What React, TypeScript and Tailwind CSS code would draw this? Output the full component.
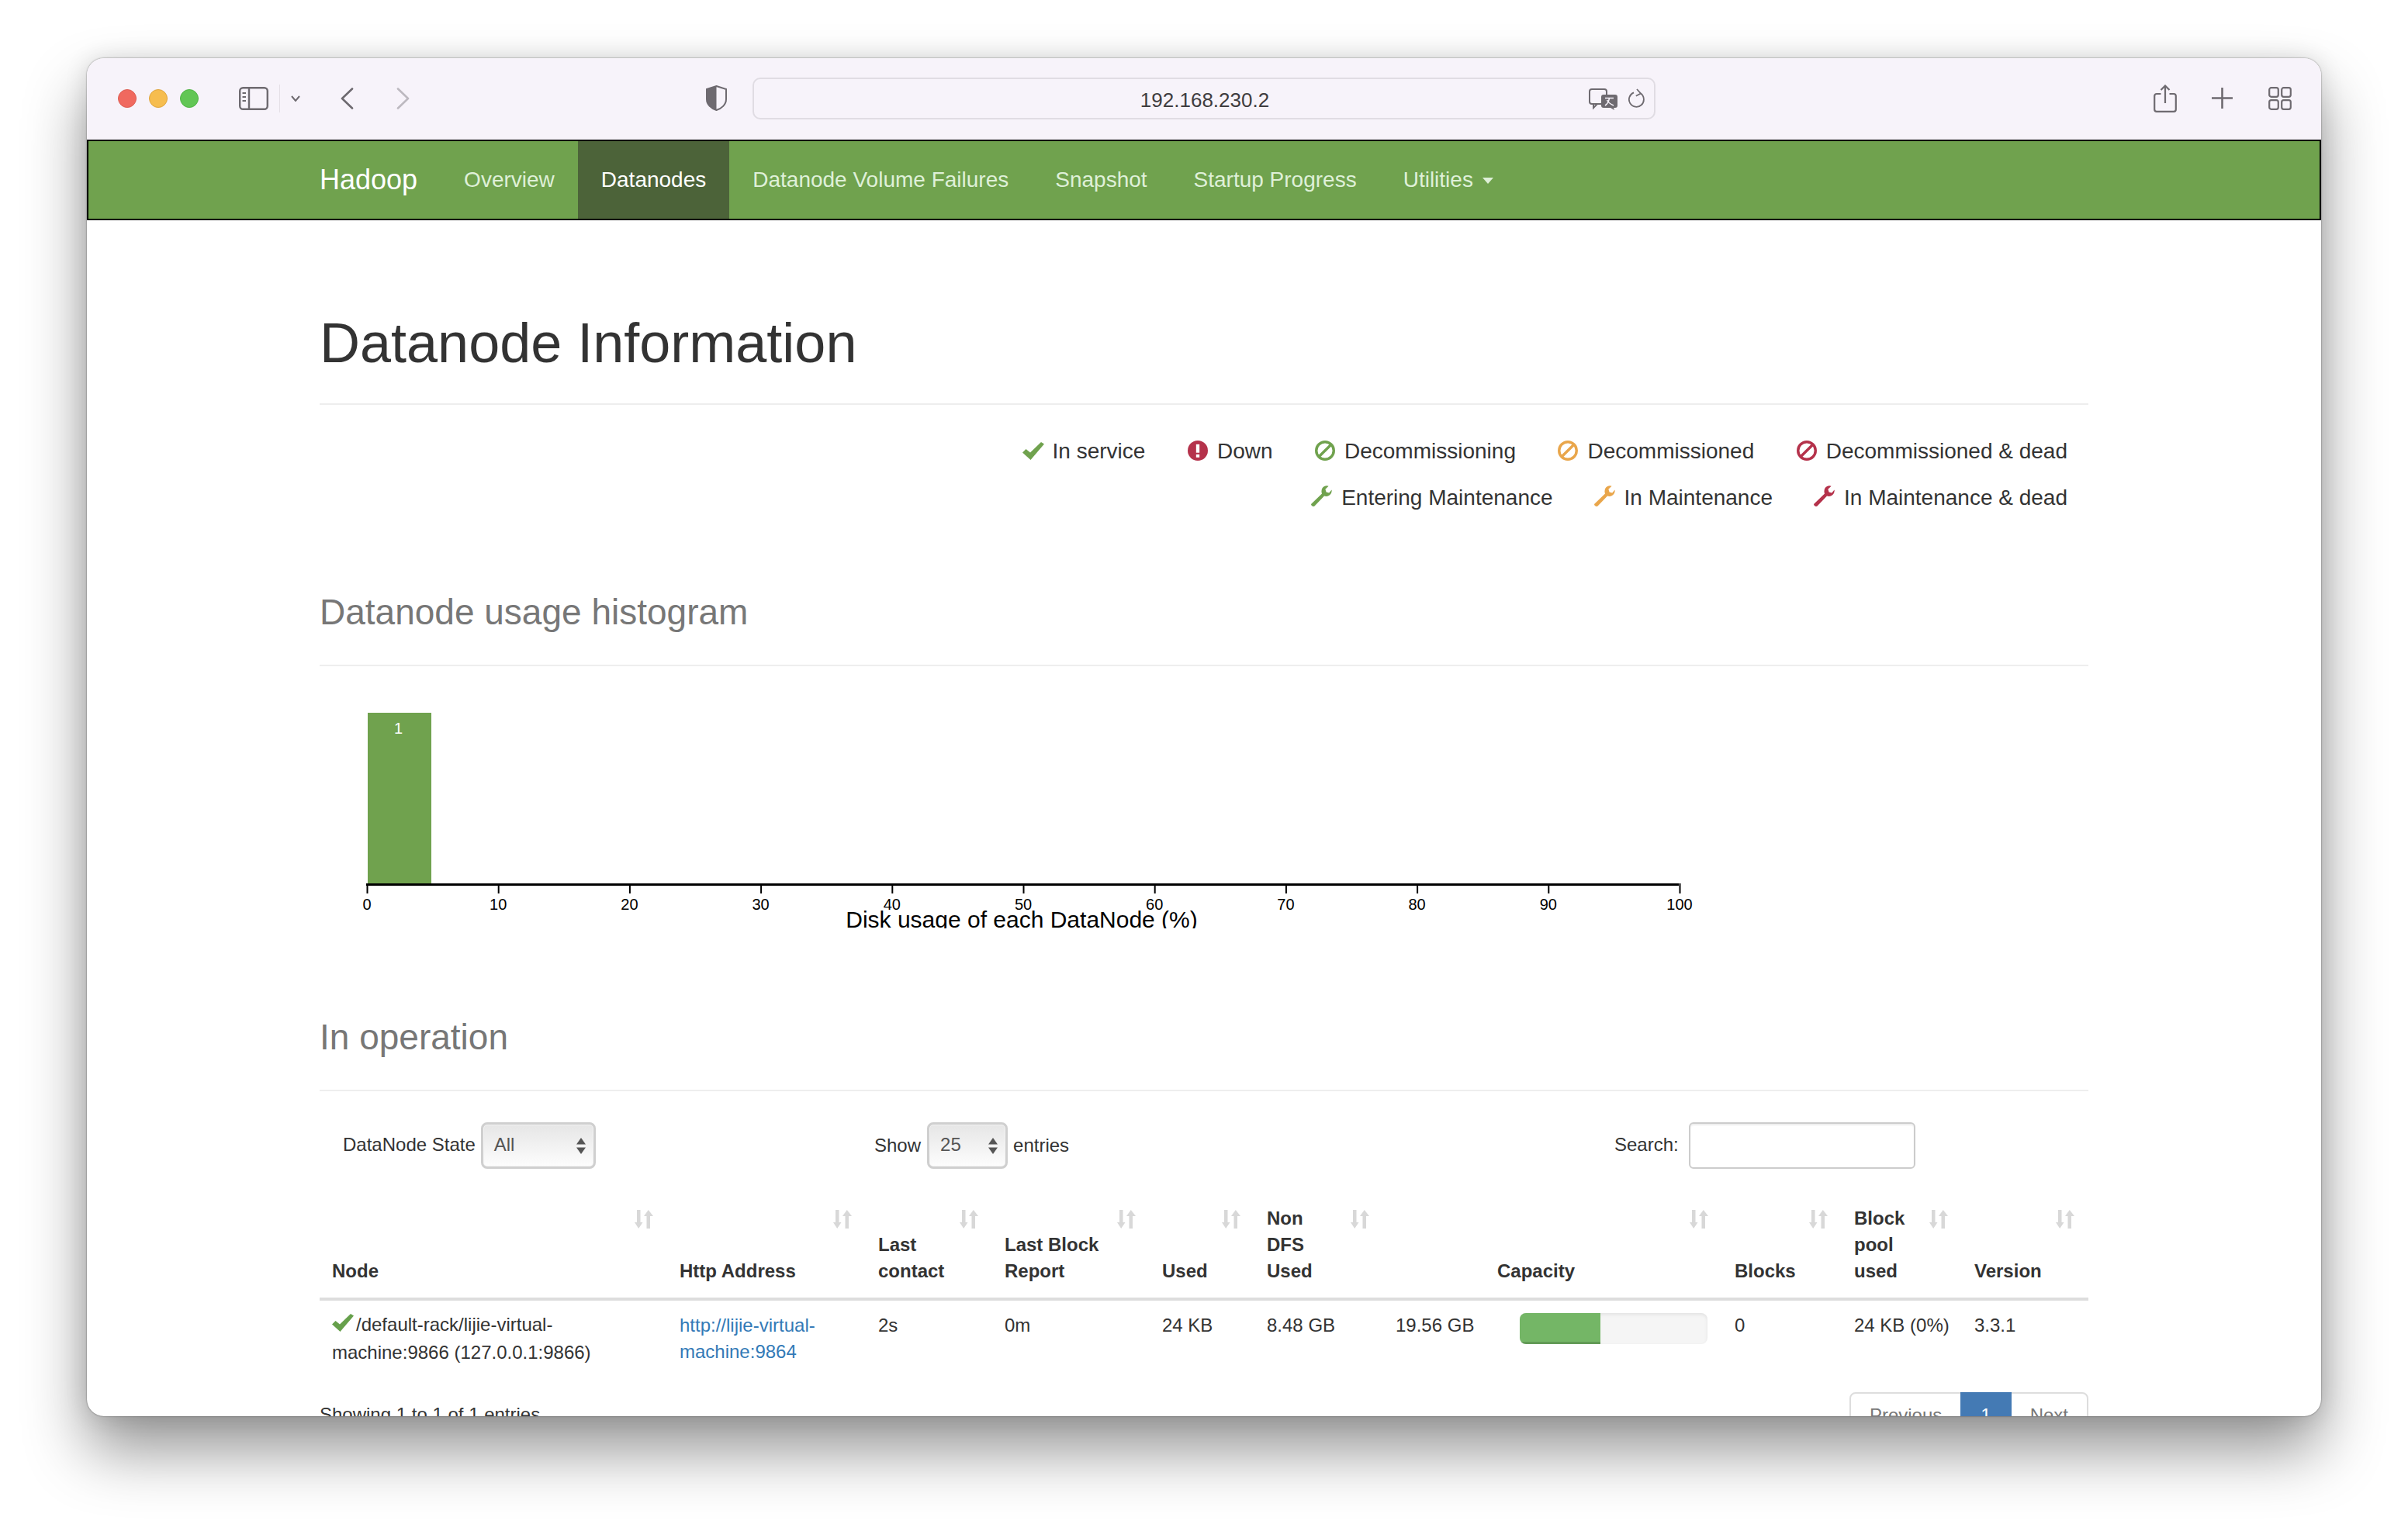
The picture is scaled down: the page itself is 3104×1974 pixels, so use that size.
const sans = "font-['Liberation_Sans',Arial,sans-serif]";

function Check({ className }: { className?: string }) {
  return (
    <svg viewBox="0 0 28 23" className={className} fill="currentColor">
      <path d="M0 13.5 L4.5 9 L10 13.5 L24 0 L28 2.5 L10.5 23 Z" />
    </svg>
  );
}

function Down({ className }: { className?: string }) {
  return (
    <svg viewBox="0 0 24 24" className={className}>
      <circle cx="12" cy="12" r="12" fill="currentColor" />
      <rect x="10" y="4.5" width="4" height="10" fill="#fff" />
      <rect x="10" y="16.5" width="4" height="3.6" fill="#fff" />
    </svg>
  );
}

function Ban({ className }: { className?: string }) {
  return (
    <svg viewBox="0 0 24 24" className={className} fill="none" stroke="currentColor" strokeWidth="3.2">
      <circle cx="12" cy="12" r="10.4" />
      <path d="M5 19 L19 5" />
    </svg>
  );
}

function Wrench({ className }: { className?: string }) {
  return (
    <svg viewBox="0 0 28 28" className={className} fill="currentColor">
      <path d="M1.5 24.5 L15 11.5 C13.6 7.5 15 3.6 18.2 2 C20 1.1 22 1.1 23.6 1.8 L19.4 5.8 L20.6 9.4 L24.2 10.4 L27.6 6.4 C28 9.6 26.8 12.4 24 14 C22 15.2 19.8 15.2 18 14.6 L5.5 27.5 C4.4 28.4 3 28 2 27 C1 26 0.7 25.4 1.5 24.5 Z" />
    </svg>
  );
}

function SortIcon() {
  return (
    <svg viewBox="0 0 24 24" className="absolute top-[20px] right-[18px] h-[24px] w-[24px] text-[#d8d8d8]" fill="currentColor">
      <path d="M3 0 H7.5 V16 H10.5 L5.2 24 L0 16 H3 Z" />
      <path d="M15.5 24 H20 V8 H24 L17.8 0 L12 8 H15.5 Z" />
    </svg>
  );
}

function SelectBox({ value, width }: { value: string; width: string }) {
  return (
    <div className={`${width} flex h-[60px] items-center justify-between rounded-[8px] border-[3px] border-[#cfcfcf] bg-gradient-to-b from-[#e6e6e6] to-[#fdfdfd] pl-[14px] pr-[10px] text-[24px] text-[#555] shadow-[inset_0_0_0_1px_#f4f4f4]`}>
      <span className="mb-[2px]">{value}</span>
      <svg viewBox="0 0 12 21" className="h-[21px] w-[12px] text-[#555]" fill="currentColor">
        <path d="M6 0 L12 8.5 H0 Z M6 21 L0 12.5 H12 Z" />
      </svg>
    </div>
  );
}

function SectionHeader({ title }: { title: string }) {
  return (
    <div className="border-b-2 border-[#eee] pb-[42px]">
      <h2 className="text-[46px] leading-[52px] font-normal text-[#777]">{title}</h2>
    </div>
  );
}

function LegendItem({ icon, color, label, gap }: { icon: "check" | "down" | "ban" | "wrench"; color: string; label: string; gap: string }) {
  return (
    <div className={`flex items-center ${gap}`}>
      <span className={`flex h-[28px] w-[28px] shrink-0 items-center justify-center ${icon === "wrench" ? "mb-[6px]" : "mb-[2px]"} ${color}`}>
        {icon === "check" && <Check className="h-[23px] w-[28px]" />}
        {icon === "down" && <Down className="h-[26px] w-[26px]" />}
        {icon === "ban" && <Ban className="h-[26px] w-[26px]" />}
        {icon === "wrench" && <Wrench className="h-[28px] w-[28px]" />}
      </span>
      <span>{label}</span>
    </div>
  );
}

const ticks = [0, 10, 20, 30, 40, 50, 60, 70, 80, 90, 100];

function Histogram() {
  return (
    <svg width="1800" height="298" viewBox="0 0 1800 298" className="block">
      <rect x="62" y="20" width="82" height="220" fill="#70a24e" />
      <text x="101.5" y="47" textAnchor="middle" fontSize="20" fill="#fff" fontFamily="Liberation Sans">1</text>
      <rect x="60" y="240" width="1692" height="3" fill="#000" />
      {ticks.map((t) => (
        <g key={t}>
          <rect x={60.5 + t * 16.92} y="240" width="2" height="13" fill="#000" />
          <text x={61 + t * 16.92} y="274" textAnchor="middle" fontSize="20" fill="#000" fontFamily="Liberation Sans">{t}</text>
        </g>
      ))}
      <text x="905" y="297" textAnchor="middle" fontSize="30" fill="#000" fontFamily="Liberation Sans">Disk usage of each DataNode (%)</text>
    </svg>
  );
}

const cols = ["w-[448px]", "w-[256px]", "w-[163px]", "w-[203px]", "w-[135px]", "w-[166px]", "w-[437px]", "w-[154px]", "w-[155px]", "w-[163px]"];

const headers = [
  ["Node"],
  ["Http Address"],
  ["Last", "contact"],
  ["Last Block", "Report"],
  ["Used"],
  ["Non", "DFS", "Used"],
  ["Capacity"],
  ["Blocks"],
  ["Block", "pool", "used"],
  ["Version"],
];

function DataTable() {
  return (
    <table className="w-[2280px] table-fixed border-collapse text-[24px] leading-[34px]">
      <thead>
        <tr className="border-b-4 border-[#ddd]">
          {headers.map((lines, i) => (
            <th key={lines[0]} className={`${cols[i]} relative px-[16px] pt-[14px] pb-[17px] text-left align-bottom font-bold ${i === 6 ? "pl-[147px]" : ""}`}>
              <SortIcon />
              {lines.map((line) => (
                <div key={line}>{line}</div>
              ))}
            </th>
          ))}
        </tr>
      </thead>
      <tbody>
        <tr className="align-top">
          <td className="px-[16px] pt-[13px] pb-[18px] leading-[36px]">
            <Check className="mr-[3px] inline-block h-[23px] w-[28px] align-[-1px] text-[#66a04b]" />
            /default-rack/lijie-virtual-
            <br />
            machine:9866 (127.0.0.1:9866)
          </td>
          <td className="px-[16px] pt-[15px]">
            <a className="text-[#337ab7]">
              http://lijie-virtual-
              <br />
              machine:9864
            </a>
          </td>
          <td className="px-[16px] pt-[15px]">2s</td>
          <td className="px-[16px] pt-[15px]">0m</td>
          <td className="px-[16px] pt-[15px]">24 KB</td>
          <td className="px-[16px] pt-[15px]">8.48 GB</td>
          <td className="px-[16px] pt-[15px]">
            <div className="flex items-start">
              <span className="w-[160px] shrink-0">19.56 GB</span>
              <div className="mt-[1px] h-[40px] w-[242px] overflow-hidden rounded-[8px] bg-[#f5f5f5] shadow-[inset_0_2px_4px_rgba(0,0,0,0.08)]">
                <div className="h-full w-[43%] bg-[#74b666] shadow-[inset_0_-3px_0_rgba(0,0,0,0.15)]" />
              </div>
            </div>
          </td>
          <td className="px-[16px] pt-[15px]">0</td>
          <td className="px-[16px] pt-[15px] whitespace-nowrap">24 KB (0%)</td>
          <td className="px-[16px] pt-[15px]">3.3.1</td>
        </tr>
      </tbody>
    </table>
  );
}

function Toolbar() {
  return (
    <div className="flex h-[105px] items-center bg-[#f7f3fa] pb-[2px] pl-[40px] text-[#6e6a70]">
      <span className="h-[24px] w-[24px] rounded-full border border-[#dd5f55] bg-[#f0695f]" />
      <span className="ml-[16px] h-[24px] w-[24px] rounded-full border border-[#dfa63f] bg-[#f6bd4f]" />
      <span className="ml-[16px] h-[24px] w-[24px] rounded-full border border-[#50b446] bg-[#62c655]" />

      <svg viewBox="0 0 38 30" className="ml-[52px] h-[30px] w-[38px]" fill="none" stroke="currentColor" strokeWidth="2.4">
        <rect x="1.2" y="1.2" width="35.6" height="27.6" rx="4" />
        <path d="M13 1.2 V28.8" />
        <path d="M4.5 8 H9 M4.5 13 H9 M4.5 18 H9" strokeWidth="2" />
      </svg>
      <span className="ml-[14px] h-[36px] w-px bg-[#e4dfe6]" />
      <svg viewBox="0 0 12 8" className="ml-[14px] h-[8px] w-[12px]" fill="none" stroke="currentColor" strokeWidth="2">
        <path d="M1 1 L6 7 L11 1" />
      </svg>
      <svg viewBox="0 0 17 28" className="ml-[52px] h-[28px] w-[17px]" fill="none" stroke="currentColor" strokeWidth="2.6" strokeLinecap="round" strokeLinejoin="round">
        <path d="M15 1.5 L2 14 L15 26.5" />
      </svg>
      <svg viewBox="0 0 17 28" className="ml-[55px] h-[28px] w-[17px] text-[#bdb9c0]" fill="none" stroke="currentColor" strokeWidth="2.6" strokeLinecap="round" strokeLinejoin="round">
        <path d="M2 1.5 L15 14 L2 26.5" />
      </svg>

      <svg viewBox="0 0 27 33" className="ml-[382px] h-[33px] w-[27px]" fill="none">
        <path d="M13.5 1 L26 5 V18 C26 25 20 30 13.5 32 C7 30 1 25 1 18 V5 Z" fill="#f7f3fa" stroke="currentColor" strokeWidth="2" />
        <path d="M13.5 1 L1 5 V18 C1 25 7 30 13.5 32 Z" fill="currentColor" />
      </svg>

      <div className="relative ml-[33px] flex h-[54px] w-[1164px] items-center justify-center rounded-[10px] border-2 border-[#e0dce3] pt-[5px] pl-[2px] text-[26px] text-[#3f3d40]">
        192.168.230.2
        {/* translate + reload sit on top of the url field */}
        <svg viewBox="0 0 38 28" className="absolute top-[12px] right-[46px] h-[28px] w-[38px] text-[#6e6a70]">
          <rect x="1" y="1" width="22" height="19" rx="3" fill="none" stroke="currentColor" strokeWidth="2" />
          <path d="M6 20 L6 25 L11 20" fill="none" stroke="currentColor" strokeWidth="2" />
          <rect x="16" y="8" width="21" height="17" rx="3" fill="currentColor" />
          <path d="M28 25 L33 28 L32 25 Z" fill="currentColor" />
          <path d="M21 12.5 H32 M26.5 12 C26 17 24 20 21 22 M23.5 15 C25 18 28.5 20.5 32 22" fill="none" stroke="#f7f3fa" strokeWidth="1.6" />
        </svg>
        <svg viewBox="0 0 22 26" className="absolute top-[12px] right-[11px] h-[26px] w-[22px] text-[#6e6a70]" fill="none" stroke="currentColor" strokeWidth="1.8">
          <path d="M16 6.6 A9.5 9.5 0 1 1 7 5.4" />
          <path d="M11 1 L16 6.5 L9.8 9.8" />
        </svg>
      </div>

      <svg viewBox="0 0 30 36" className="ml-[642px] h-[36px] w-[30px]" fill="none" stroke="currentColor" strokeWidth="2.2">
        <path d="M9.5 12 H4 C2.4 12 1.2 13.2 1.2 14.8 V32 C1.2 33.6 2.4 34.8 4 34.8 H26 C27.6 34.8 28.8 33.6 28.8 32 V14.8 C28.8 13.2 27.6 12 26 12 H20.5" />
        <path d="M15 24 V1.5 M9.5 7 L15 1.5 L20.5 7" />
      </svg>
      <svg viewBox="0 0 27 27" className="ml-[45px] h-[27px] w-[27px]" fill="none" stroke="currentColor" strokeWidth="2.6">
        <path d="M13.5 0 V27 M0 13.5 H27" />
      </svg>
      <svg viewBox="0 0 30 30" className="ml-[46px] h-[30px] w-[30px]" fill="none" stroke="currentColor" strokeWidth="2.2">
        <rect x="1.2" y="1.2" width="11.6" height="11.6" rx="2.5" />
        <rect x="17.2" y="1.2" width="11.6" height="11.6" rx="2.5" />
        <rect x="1.2" y="17.2" width="11.6" height="11.6" rx="2.5" />
        <rect x="17.2" y="17.2" width="11.6" height="11.6" rx="2.5" />
      </svg>
    </div>
  );
}

function NavBar() {
  const links = ["Overview", "Datanodes", "Datanode Volume Failures", "Snapshot", "Startup Progress"];
  return (
    <div className="h-[104px] border-2 border-black bg-[#70a24e]">
      <div className="mx-auto flex h-full w-[2280px] items-center text-[28px]">
        <span className="pr-[30px] text-[36px] text-white">Hadoop</span>
        {links.map((l) =>
          l === "Datanodes" ? (
            <span key={l} className="flex h-full items-center bg-[#4c6339] px-[30px] text-white">
              {l}
            </span>
          ) : (
            <span key={l} className="px-[30px] text-[#dff0d8]">
              {l}
            </span>
          ),
        )}
        <span className="flex items-center px-[30px] text-[#dff0d8]">
          Utilities
          <span className="ml-[12px] mt-[2px] h-0 w-0 border-x-[7px] border-t-[8px] border-x-transparent border-t-[#dff0d8]" />
        </span>
      </div>
    </div>
  );
}

export default function App() {
  return (
    <div className={`${sans} h-[1974px] w-[3104px] overflow-hidden bg-white pt-[75px] pl-[112px] text-[#333]`}>
      <div className="h-[1751px] w-[2880px] overflow-hidden rounded-[22px] bg-white shadow-[0_44px_80px_rgba(0,0,0,0.42),0_0_30px_rgba(0,0,0,0.12),0_0_2px_rgba(0,0,0,0.55)]">
        <Toolbar />
        <NavBar />
        <div className="mx-auto w-[2280px]">
          <div className="mt-[118px] border-b-2 border-[#eee] pb-[38px]">
            <h1 className="text-[72px] leading-[80px] font-normal">Datanode Information</h1>
          </div>

          <div className="flex flex-col items-end pt-[40px] pr-[27px] text-[28px] leading-[40px]">
            <div className="flex gap-[53.5px]">
              <LegendItem icon="check" color="text-[#70a24e]" label="In service" gap="gap-[11px]" />
              <LegendItem icon="down" color="text-[#b5324b]" label="Down" gap="gap-[11px]" />
              <LegendItem icon="ban" color="text-[#70a24e]" label="Decommissioning" gap="gap-[11px]" />
              <LegendItem icon="ban" color="text-[#e9a64b]" label="Decommissioned" gap="gap-[11px]" />
              <LegendItem icon="ban" color="text-[#b5324b]" label="Decommissioned & dead" gap="gap-[11px]" />
            </div>
            <div className="mt-[20px] flex gap-[52px]">
              <LegendItem icon="wrench" color="text-[#70a24e]" label="Entering Maintenance" gap="gap-[12px]" />
              <LegendItem icon="wrench" color="text-[#e9a64b]" label="In Maintenance" gap="gap-[12px]" />
              <LegendItem icon="wrench" color="text-[#b5324b]" label="In Maintenance & dead" gap="gap-[12px]" />
            </div>
          </div>

          <div className="mt-[101px]">
            <SectionHeader title="Datanode usage histogram" />
          </div>

          <div className="mt-[40px]">
            <Histogram />
          </div>

          <div className="mt-[114px]">
            <SectionHeader title="In operation" />
          </div>

          <div className="mt-[40px] grid grid-cols-[715px_954px_1fr] items-center text-[24px]">
            <div className="flex items-center pl-[30px]">
              <span className="mr-[7px] mb-[2px]">DataNode State</span>
              <SelectBox value="All" width="w-[148px]" />
            </div>
            <div className="flex items-center">
              <span className="mr-[8px]">Show</span>
              <SelectBox value="25" width="w-[104px]" />
              <span className="ml-[7px]">entries</span>
            </div>
            <div className="flex items-center">
              <span className="mr-[13px] mb-[2px]">Search:</span>
              <div className="h-[60px] w-[292px] rounded-[6px] border-2 border-[#ccc] bg-white shadow-[inset_0_2px_2px_rgba(0,0,0,0.07)]" />
            </div>
          </div>

          <div className="mt-[33px]">
            <DataTable />
          </div>

          <div className="mt-[15px] flex items-start justify-between text-[24px] leading-[34px]">
            <span className="pt-[12px]">Showing 1 to 1 of 1 entries</span>
            <div className="flex h-[60px] items-stretch rounded-[8px] border-2 border-[#ddd] text-[#777]">
              <span className="flex items-center px-[24px]">Previous</span>
              <span className="-my-[2px] flex items-center bg-[#447ab4] px-[26px] text-white">1</span>
              <span className="flex items-center px-[24px]">Next</span>
            </div>
          </div>
        </div>
      </div>
    </div>
  );
}
